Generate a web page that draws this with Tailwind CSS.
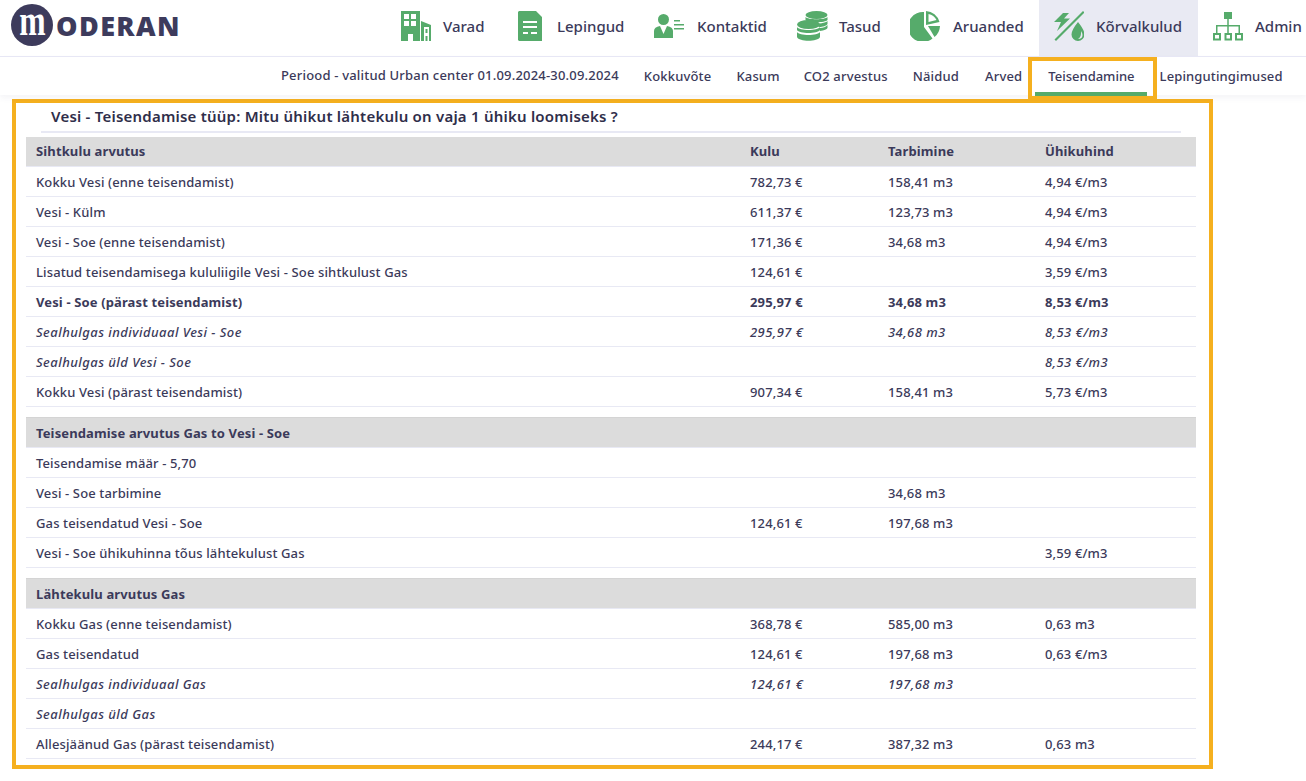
<!DOCTYPE html>
<html lang="en">
<head>
  <meta charset="UTF-8">
  <title>Moderan - Teisendamine</title>
  <script src="https://cdn.jsdelivr.net/npm/@tailwindcss/browser@4"></script>
</head>
<body class="bg-white h-[781px] overflow-hidden font-['Noto_Sans',sans-serif] text-[13px] text-[#3b3a5a]">

  <!-- Top nav -->
  <header class="relative flex h-[57px] border-b border-[#e8e8f6] overflow-hidden">
    <div class="flex items-center pl-[11px] w-[386px] h-[50px] shrink-0">
      <div class="w-[42px] h-[42px] rounded-full bg-[#3d3b5c] flex items-center justify-center shrink-0">
        <span class="font-['Liberation_Serif',serif] font-bold text-[44px] leading-[24px] text-white -mt-[9px] scale-x-[0.72]">m</span>
      </div>
      <span class="font-['Open_Sans',sans-serif] font-extrabold text-[27px] tracking-[1.4px] leading-none text-[#3d3b5c] ml-[3px]">ODERAN</span>
    </div>
    <nav class="flex text-[15px] font-medium whitespace-nowrap">
      <a class="flex items-center px-[15px] w-[117px] h-[56px] pb-[4px]">
        <svg class="w-[30px] h-[30px] mr-[12px] shrink-0" viewBox="0 0 30 30" fill="#56ab6b"><path fill-rule="evenodd" d="M0 0h19v30H12v-7H7v7H0zM3 3v5h5V3zm7 0v5h5V3zM3 10v5h5v-5zm7 0v5h5v-5z"/><path fill-rule="evenodd" d="M20 10l10 4v16H20zM23 16v14h1.500v-5h2v5H28V16zm1.500 2h2v4h-2z"/></svg>
        Varad
      </a>
      <a class="flex items-center px-[15px] w-[136px] h-[56px] pb-[4px]">
        <svg class="w-[24px] h-[30px] mr-[15px] shrink-0" viewBox="0 0 24 30" fill="#56ab6b"><path fill-rule="evenodd" d="M1 0h17l6 6v24H1l-1-1V1zM5 10v2h14v-2zm0 5v2h14v-2zm0 6v2h5v-2zm8 0v2h6v-2z"/></svg>
        Lepingud
      </a>
      <a class="flex items-center px-[15px] w-[143px] h-[56px] pb-[4px]">
        <svg class="w-[30px] h-[24px] mr-[13px] shrink-0" viewBox="0 0 30 24" fill="#56ab6b"><circle cx="9.500" cy="5.500" r="5.500"/><path d="M0 24v-7q0-4 6-5l3.500 8 3.500-8q6 1 6 5v7z"/><path d="M20 6h6v1.500h-6zm0 4h10v1.500H20zm0 4h10v1.500H20z"/></svg>
        Kontaktid
      </a>
      <a class="flex items-center px-[15px] w-[113px] h-[56px] pb-[4px]">
        <svg class="w-[31px] h-[30px] mr-[11px] shrink-0" viewBox="0 0 31 30" fill="#56ab6b"><ellipse cx="19.500" cy="4" rx="11" ry="4"/><path d="M8.500 6c2 3 20 3 22 0v3c-2 3-20 3-22 0zM16 13c5 0 13-1 14.500-3v3c-1 2-5 3-8 3zM23 17c3 0 6-1 7.500-3v3q-1 2-7.500 3z"/><ellipse cx="11.500" cy="13.500" rx="11.500" ry="4.500"/><path d="M0 16c2 4 21 4 23 0v3c-2 4-21 4-23 0zM0 21c2 4 21 4 23 0v5c-2 5-21 5-23 0z"/></svg>
        Tasud
      </a>
      <a class="flex items-center px-[15px] w-[144px] h-[56px] pb-[4px]">
        <svg class="w-[30px] h-[30px] mr-[13px] shrink-0" viewBox="0 0 30 30" fill="#56ab6b"><path d="M14 1v15l8.500 11.500A15 15 0 1 1 14 1z"/><path d="M18 15h12a15 15 0 0 1-5.500 11z"/><path fill-rule="evenodd" d="M16 0a15 15 0 0 1 13.500 11L16 14zM18.500 3v8l8-2a12 12 0 0 0-8-6z"/></svg>
        Aruanded
      </a>
      <a class="flex items-center px-[15px] w-[159px] h-[56px] pb-[4px] bg-[#e9eaf3]">
        <svg class="w-[30px] h-[30px] mr-[12px] shrink-0" viewBox="0 0 30 30" fill="#56ab6b"><path d="M9 2h6l-5 5.500h6L3 20l4-9H0z"/><path d="M29 0l1.500 1.500L2 30 .5 28.500z"/><path fill-rule="evenodd" d="M24 11q6.500 8 6.500 12.500a6.500 6.500 0 0 1-13 0Q17.500 19 24 11zm3 9q.5 6-3 8 4.500 0 4.500-4 0-2-1.500-4z"/></svg>
        Kõrvalkulud
      </a>
      <a class="flex items-center px-[15px] h-[56px] pb-[4px]">
        <svg class="w-[30px] h-[30px] mr-[12px] shrink-0" viewBox="0 0 30 30" fill="#56ab6b"><path d="M11 1h8v7h-8z"/><path d="M14.250 8h1.500v6H27v8h-1.500v-6.500h-9.750V22h-1.500v-6.500H4.500V22H3v-8h11.250z"/><path fill-rule="evenodd" d="M0 22h8v7.500H0zm2 2v3.500h4V24zM11.500 22h7.500v7.500h-7.500zm2 2v3.500H17V24zM22 22h8v7.500h-8zm2 2v3.500h4V24z"/></svg>
        Admin
      </a>
    </nav>
  </header>

  <!-- Sub nav -->
  <div class="relative h-[38px] flex items-center pl-[281px] pt-[2px] whitespace-nowrap font-medium tracking-[0.17px] shadow-[0_3px_6px_rgba(60,60,120,0.06)]">
    <span class="mr-[25px] -mt-[3px] tracking-[0.19px]">Periood - valitud Urban center 01.09.2024-30.09.2024</span>
    <a class="mr-[25px]">Kokkuvõte</a>
    <a class="mr-[24px]">Kasum</a>
    <a class="mr-[25px]">CO2 arvestus</a>
    <a class="mr-[26px]">Näidud</a>
    <a class="mr-[26px]">Arved</a>
    <a class="mr-[25px] relative tracking-normal">Teisendamine
      <span class="absolute left-[-13px] right-[-12px] top-[25px] h-[4px] bg-[#56ab6b]"></span>
      <span class="absolute left-[-20px] right-[-22px] top-[-10px] h-[43px] border-4 border-[#f5b01f]"></span>
    </a>
    <a class="tracking-[0.13px]">Lepingutingimused</a>
  </div>

  <!-- Main box -->
  <main class="ml-[12px] mt-[4px] w-[1201px] h-[670px] border-4 border-[#f5b01f] pl-[10px] pr-[13px] font-medium tracking-[0.13px]">
    <div class="mx-[15px] border-b-2 border-[#e8e9f4] h-[30px] pl-[10px] text-[15px] text-[#2f2e4a] font-semibold tracking-[0.22px] leading-[26px]">Vesi - Teisendamise tüüp: Mitu ühikut lähtekulu on vaja 1 ühiku loomiseks ?</div>

    <div class="mt-[4px] grid grid-cols-[714px_138px_157px_1fr] h-[30px] items-center bg-[#dcdcdc] border-b border-[#e8e9f4] font-bold"><span class="pl-[10px]">Sihtkulu arvutus</span><span class="pl-[10px]">Kulu</span><span class="pl-[10px]">Tarbimine</span><span class="pl-[10px]">Ühikuhind</span></div>
    <div class="grid grid-cols-[714px_138px_157px_1fr] h-[30px] pt-[2px] items-center border-b border-[#e8e9f4]"><span class="pl-[10px]">Kokku Vesi (enne teisendamist)</span><span class="pl-[10px]">782,73 €</span><span class="pl-[10px]">158,41 m3</span><span class="pl-[10px]">4,94 €/m3</span></div>
    <div class="grid grid-cols-[714px_138px_157px_1fr] h-[30px] pt-[2px] items-center border-b border-[#e8e9f4]"><span class="pl-[10px]">Vesi - Külm</span><span class="pl-[10px]">611,37 €</span><span class="pl-[10px]">123,73 m3</span><span class="pl-[10px]">4,94 €/m3</span></div>
    <div class="grid grid-cols-[714px_138px_157px_1fr] h-[30px] pt-[2px] items-center border-b border-[#e8e9f4]"><span class="pl-[10px]">Vesi - Soe (enne teisendamist)</span><span class="pl-[10px]">171,36 €</span><span class="pl-[10px]">34,68 m3</span><span class="pl-[10px]">4,94 €/m3</span></div>
    <div class="grid grid-cols-[714px_138px_157px_1fr] h-[30px] pt-[2px] items-center border-b border-[#e8e9f4]"><span class="pl-[10px]">Lisatud teisendamisega kululiigile Vesi - Soe sihtkulust Gas</span><span class="pl-[10px]">124,61 €</span><span></span><span class="pl-[10px]">3,59 €/m3</span></div>
    <div class="grid grid-cols-[714px_138px_157px_1fr] h-[30px] pt-[2px] items-center border-b border-[#e8e9f4] font-bold"><span class="pl-[10px]">Vesi - Soe (pärast teisendamist)</span><span class="pl-[10px]">295,97 €</span><span class="pl-[10px]">34,68 m3</span><span class="pl-[10px]">8,53 €/m3</span></div>
    <div class="grid grid-cols-[714px_138px_157px_1fr] h-[30px] pt-[2px] items-center border-b border-[#e8e9f4] italic tracking-[0.45px]"><span class="pl-[10px]">Sealhulgas individuaal Vesi - Soe</span><span class="pl-[10px]">295,97 €</span><span class="pl-[10px]">34,68 m3</span><span class="pl-[10px]">8,53 €/m3</span></div>
    <div class="grid grid-cols-[714px_138px_157px_1fr] h-[30px] pt-[2px] items-center border-b border-[#e8e9f4] italic tracking-[0.45px]"><span class="pl-[10px]">Sealhulgas üld Vesi - Soe</span><span></span><span></span><span class="pl-[10px]">8,53 €/m3</span></div>
    <div class="grid grid-cols-[714px_138px_157px_1fr] h-[30px] pt-[2px] items-center border-b border-[#e8e9f4]"><span class="pl-[10px]">Kokku Vesi (pärast teisendamist)</span><span class="pl-[10px]">907,34 €</span><span class="pl-[10px]">158,41 m3</span><span class="pl-[10px]">5,73 €/m3</span></div>

    <div class="mt-[10px] grid grid-cols-[714px_138px_157px_1fr] h-[31px] pt-[2px] items-center bg-[#dcdcdc] border-t border-t-[#d4d4d4] border-b border-[#e8e9f4] font-bold"><span class="pl-[10px]">Teisendamise arvutus Gas to Vesi - Soe</span></div>
    <div class="grid grid-cols-[714px_138px_157px_1fr] h-[30px] pt-[2px] items-center border-b border-[#e8e9f4]"><span class="pl-[10px]">Teisendamise määr - 5,70</span></div>
    <div class="grid grid-cols-[714px_138px_157px_1fr] h-[30px] pt-[2px] items-center border-b border-[#e8e9f4]"><span class="pl-[10px]">Vesi - Soe tarbimine</span><span></span><span class="pl-[10px]">34,68 m3</span></div>
    <div class="grid grid-cols-[714px_138px_157px_1fr] h-[30px] pt-[2px] items-center border-b border-[#e8e9f4]"><span class="pl-[10px]">Gas teisendatud Vesi - Soe</span><span class="pl-[10px]">124,61 €</span><span class="pl-[10px]">197,68 m3</span></div>
    <div class="grid grid-cols-[714px_138px_157px_1fr] h-[30px] pt-[2px] items-center border-b border-[#e8e9f4]"><span class="pl-[10px]">Vesi - Soe ühikuhinna tõus lähtekulust Gas</span><span></span><span></span><span class="pl-[10px]">3,59 €/m3</span></div>

    <div class="mt-[10px] grid grid-cols-[714px_138px_157px_1fr] h-[31px] pt-[2px] items-center bg-[#dcdcdc] border-t border-t-[#d4d4d4] border-b border-[#e8e9f4] font-bold"><span class="pl-[10px]">Lähtekulu arvutus Gas</span></div>
    <div class="grid grid-cols-[714px_138px_157px_1fr] h-[30px] pt-[2px] items-center border-b border-[#e8e9f4]"><span class="pl-[10px]">Kokku Gas (enne teisendamist)</span><span class="pl-[10px]">368,78 €</span><span class="pl-[10px]">585,00 m3</span><span class="pl-[10px]">0,63 m3</span></div>
    <div class="grid grid-cols-[714px_138px_157px_1fr] h-[30px] pt-[2px] items-center border-b border-[#e8e9f4]"><span class="pl-[10px]">Gas teisendatud</span><span class="pl-[10px]">124,61 €</span><span class="pl-[10px]">197,68 m3</span><span class="pl-[10px]">0,63 €/m3</span></div>
    <div class="grid grid-cols-[714px_138px_157px_1fr] h-[30px] pt-[2px] items-center border-b border-[#e8e9f4] italic tracking-[0.45px]"><span class="pl-[10px]">Sealhulgas individuaal Gas</span><span class="pl-[10px]">124,61 €</span><span class="pl-[10px]">197,68 m3</span></div>
    <div class="grid grid-cols-[714px_138px_157px_1fr] h-[30px] pt-[2px] items-center border-b border-[#e8e9f4] italic tracking-[0.45px]"><span class="pl-[10px]">Sealhulgas üld Gas</span></div>
    <div class="grid grid-cols-[714px_138px_157px_1fr] h-[30px] pt-[2px] items-center border-b border-[#e8e9f4]"><span class="pl-[10px]">Allesjäänud Gas (pärast teisendamist)</span><span class="pl-[10px]">244,17 €</span><span class="pl-[10px]">387,32 m3</span><span class="pl-[10px]">0,63 m3</span></div>
  </main>
</body>
</html>
